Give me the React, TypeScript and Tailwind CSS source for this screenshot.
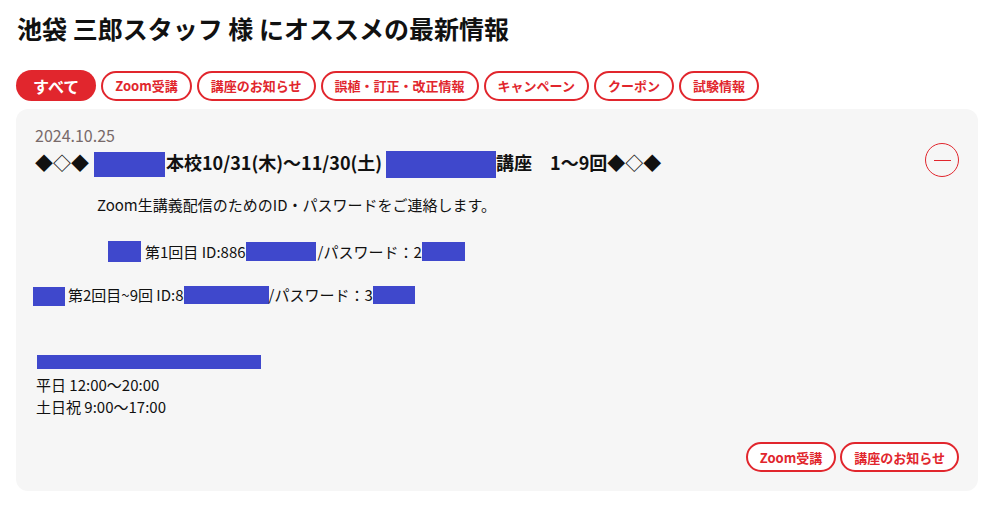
// ===========================================
// オススメ最新情報
// ===========================================

const FONT = { fontFamily: '"Noto Sans CJK JP", "Noto Sans", sans-serif' };

const tabs = ['Zoom受講', '講座のお知らせ', '誤植・訂正・改正情報', 'キャンペーン', 'クーポン', '試験情報'];

// 伏せ字ブロック
function Mask({ w, h }: { w: number; h: number }) {
  return (
    <span
      className="inline-block bg-[#3f48cc] align-middle"
      style={{ width: w, height: h }}
    />
  );
}

function Pill({ label }: { label: string }) {
  return (
    <span className="inline-flex h-[30px] items-center rounded-full border-2 border-[#e1262d] bg-white px-[12px] text-[13px] font-bold leading-none text-[#e1262d]">
      {label}
    </span>
  );
}

export default function App() {
  return (
    <div className="min-h-[525px] w-[997px] bg-white px-4 pt-[11px]" style={FONT}>
      <h1 className="pl-[1px] text-[25px] font-bold leading-[34px] text-[#111]">
        池袋 三郎スタッフ 様 にオススメの最新情報
      </h1>

      {/* タブ */}
      <div className="mt-[25px] flex items-center gap-[5px]">
        <span className="inline-flex h-[31px] items-center rounded-full bg-[#e1262d] px-[17px] text-[16px] font-bold leading-none text-white">
          すべて
        </span>
        {tabs.map((t) => (
          <Pill key={t} label={t} />
        ))}
      </div>

      {/* お知らせカード */}
      <div className="mt-[8px] w-[962px] rounded-[12px] bg-[#f6f6f6] px-[19px] pb-[19px] pt-[15px] text-[#111]">
        <div className="text-[16px] leading-[22px] text-[#786a6a]">2024.10.25</div>
        <div className="mt-[1px] flex items-center justify-between">
          <div className="flex items-center text-[18px] font-bold leading-[28px]">
            <span>◆◇◆</span>
            <span className="ml-[5px] mr-[1px]"><Mask w={71} h={25} /></span>
            <span>本校10/31(木)～11/30(土)</span>
            <span className="ml-[4px]"><Mask w={110} h={27} /></span>
            <span>講座　1～9回◆◇◆</span>
          </div>
          <button className="mt-[-4px] flex h-[34px] w-[34px] items-center justify-center rounded-full border-[1.5px] border-[#e1262d]">
            <span className="block h-[1.5px] w-[17px] bg-[#e1262d]" />
          </button>
        </div>

        <div className="mt-[16px] text-[15px] leading-[22px]">
          <p className="pl-[62px]">Zoom生講義配信のためのID・パスワードをご連絡します。</p>
          <p className="mt-[25px] flex items-center pl-[73px]">
            <Mask w={33} h={21} />
            <span className="ml-[4px]">第1回目 ID:886</span>
            <Mask w={70} h={19} />
            <span className="ml-[2px]">/パスワード：2</span>
            <Mask w={43} h={19} />
          </p>
          <p className="mt-[21px] flex items-center">
            <span className="-ml-[2px]"><Mask w={32} h={19} /></span>
            <span className="ml-[3px]">第2回目~9回 ID:8</span>
            <Mask w={85} h={18} />
            <span>/パスワード：3</span>
            <Mask w={42} h={18} />
          </p>
          <div className="mt-[43px] pl-[2px]">
            <Mask w={224} h={14} />
          </div>
          <p className="mt-[3px] pl-[1px]">平日 12:00～20:00</p>
          <p className="pl-[1px]">土日祝 9:00～17:00</p>
        </div>

        <div className="mt-[24px] flex justify-end gap-[4px] pr-0">
          <Pill label="Zoom受講" />
          <Pill label="講座のお知らせ" />
        </div>
      </div>
    </div>
  );
}
